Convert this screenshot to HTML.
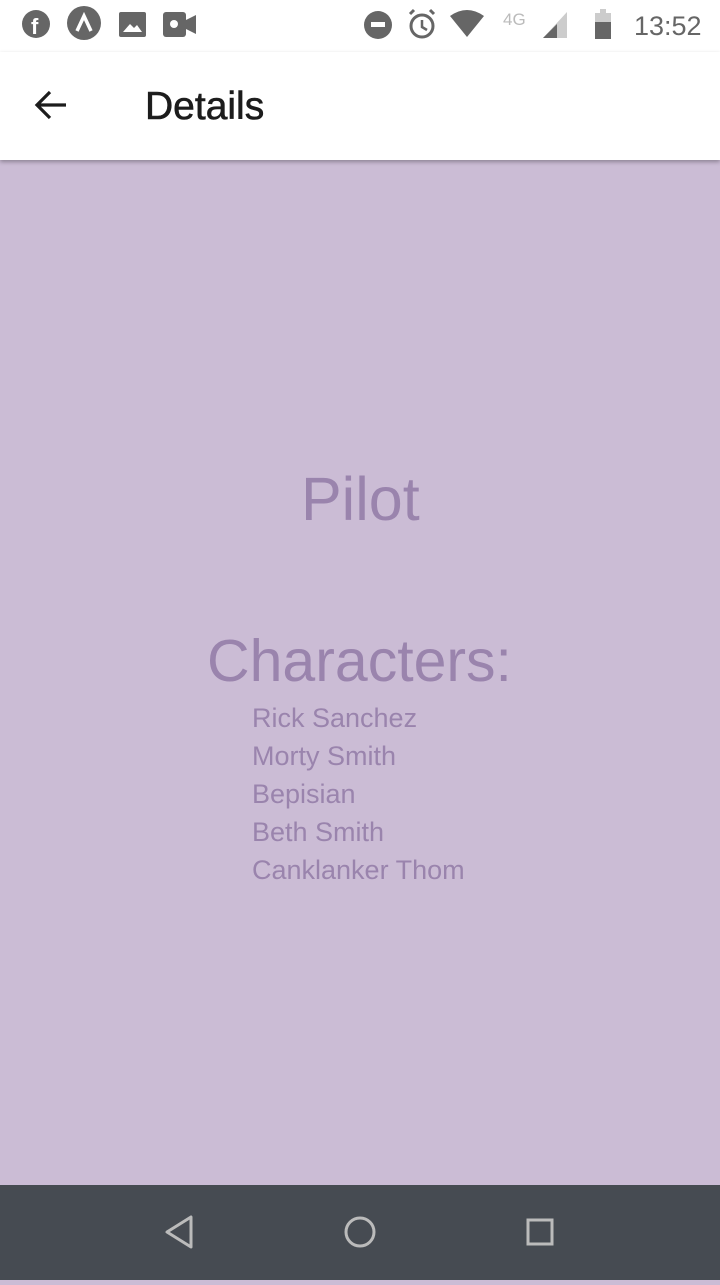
<!DOCTYPE html>
<html><head><meta charset="utf-8"><style>
*{margin:0;padding:0;box-sizing:border-box}
body{width:720px;height:1280px;position:relative;background:#cbbcd5;font-family:"Liberation Sans",sans-serif;overflow:hidden}
.status{position:absolute;top:0;left:0;width:720px;height:52px;background:#fff}
.app{position:absolute;top:52px;left:0;width:720px;height:108px;background:#fff;box-shadow:0 2px 4px rgba(0,0,0,.3)}
.title{position:absolute;left:145px;top:33px;font-size:39px;color:#1c1c1c;-webkit-text-stroke:0.6px #1c1c1c}
.t{position:absolute;color:#9a84ad;white-space:nowrap}
.nav{position:absolute;left:0;top:1185px;width:720px;height:95px;background:#464b52}
</style></head><body>
<div class="status">
<svg width="720" height="52" style="position:absolute;left:0;top:0">
<circle cx="36" cy="24" r="14" fill="#666"/><text x="31" y="34" font-size="22" font-weight="bold" fill="#fff" font-family="Liberation Sans">f</text>
<circle cx="84" cy="23" r="17" fill="#666"/><path d="M77 31 L84 16 L91 31" stroke="#fff" stroke-width="3.5" fill="none"/>
<rect x="119" y="12" width="27" height="25" rx="2" fill="#666"/><path d="M123 32 L130 24 L134 28 L137 25 L142 32Z" fill="#fff"/>
<rect x="163" y="12" width="23" height="25" rx="3" fill="#666"/><path d="M186 20 L196 15 V34 L186 29Z" fill="#666"/><circle cx="174" cy="24" r="4" fill="#fff"/>
<circle cx="378" cy="25" r="14" fill="#666"/><rect x="371" y="22" width="14" height="5" fill="#fff"/>
<circle cx="422" cy="26" r="11" stroke="#666" stroke-width="3" fill="none"/><path d="M422 20 V27 L427 30" stroke="#666" stroke-width="2.5" fill="none"/><path d="M410 14 L414 10 M434 14 L430 10" stroke="#666" stroke-width="3"/>
<path d="M450 16 Q467 4 484 16 L467 37Z" fill="#666"/>
<text x="503" y="25" font-size="17" fill="#bbb" font-family="Liberation Sans">4G</text>
<path d="M543 38 L567 38 L567 12Z" fill="#ccc"/><path d="M543 38 L557 38 L557 24Z" fill="#666"/>
<rect x="595" y="13" width="16" height="26" fill="#ccc"/><rect x="600" y="9" width="6" height="5" fill="#ccc"/><rect x="595" y="22" width="16" height="17" fill="#666"/>
<text x="634" y="35" font-size="27" fill="#666" font-family="Liberation Sans">13:52</text>
</svg></div>
<div class="app">
<svg width="40" height="40" style="position:absolute;left:32px;top:33px"><path d="M34 20 H6 M18 7 L5 20 L18 33" stroke="#1c1c1c" stroke-width="3.2" fill="none"/></svg>
<div class="title">Details</div></div>
<div class="t" style="left:301px;top:464px;font-size:61px">Pilot</div>
<div class="t" style="left:207px;top:627px;font-size:59px">Characters:</div>
<div class="t" style="left:252px;top:699px;font-size:27px;line-height:38px">Rick Sanchez<br>Morty Smith<br>Bepisian<br>Beth Smith<br>Canklanker Thom</div>
<div class="nav"><svg width="720" height="95">
<path d="M191 32 V62 L167 47Z" stroke="#bbb" stroke-width="3" fill="none" stroke-linejoin="round"/>
<circle cx="360" cy="47" r="14" stroke="#bbb" stroke-width="3" fill="none"/>
<rect x="528" y="35" width="24" height="24" stroke="#bbb" stroke-width="3" fill="none"/>
</svg></div>
</body></html>
